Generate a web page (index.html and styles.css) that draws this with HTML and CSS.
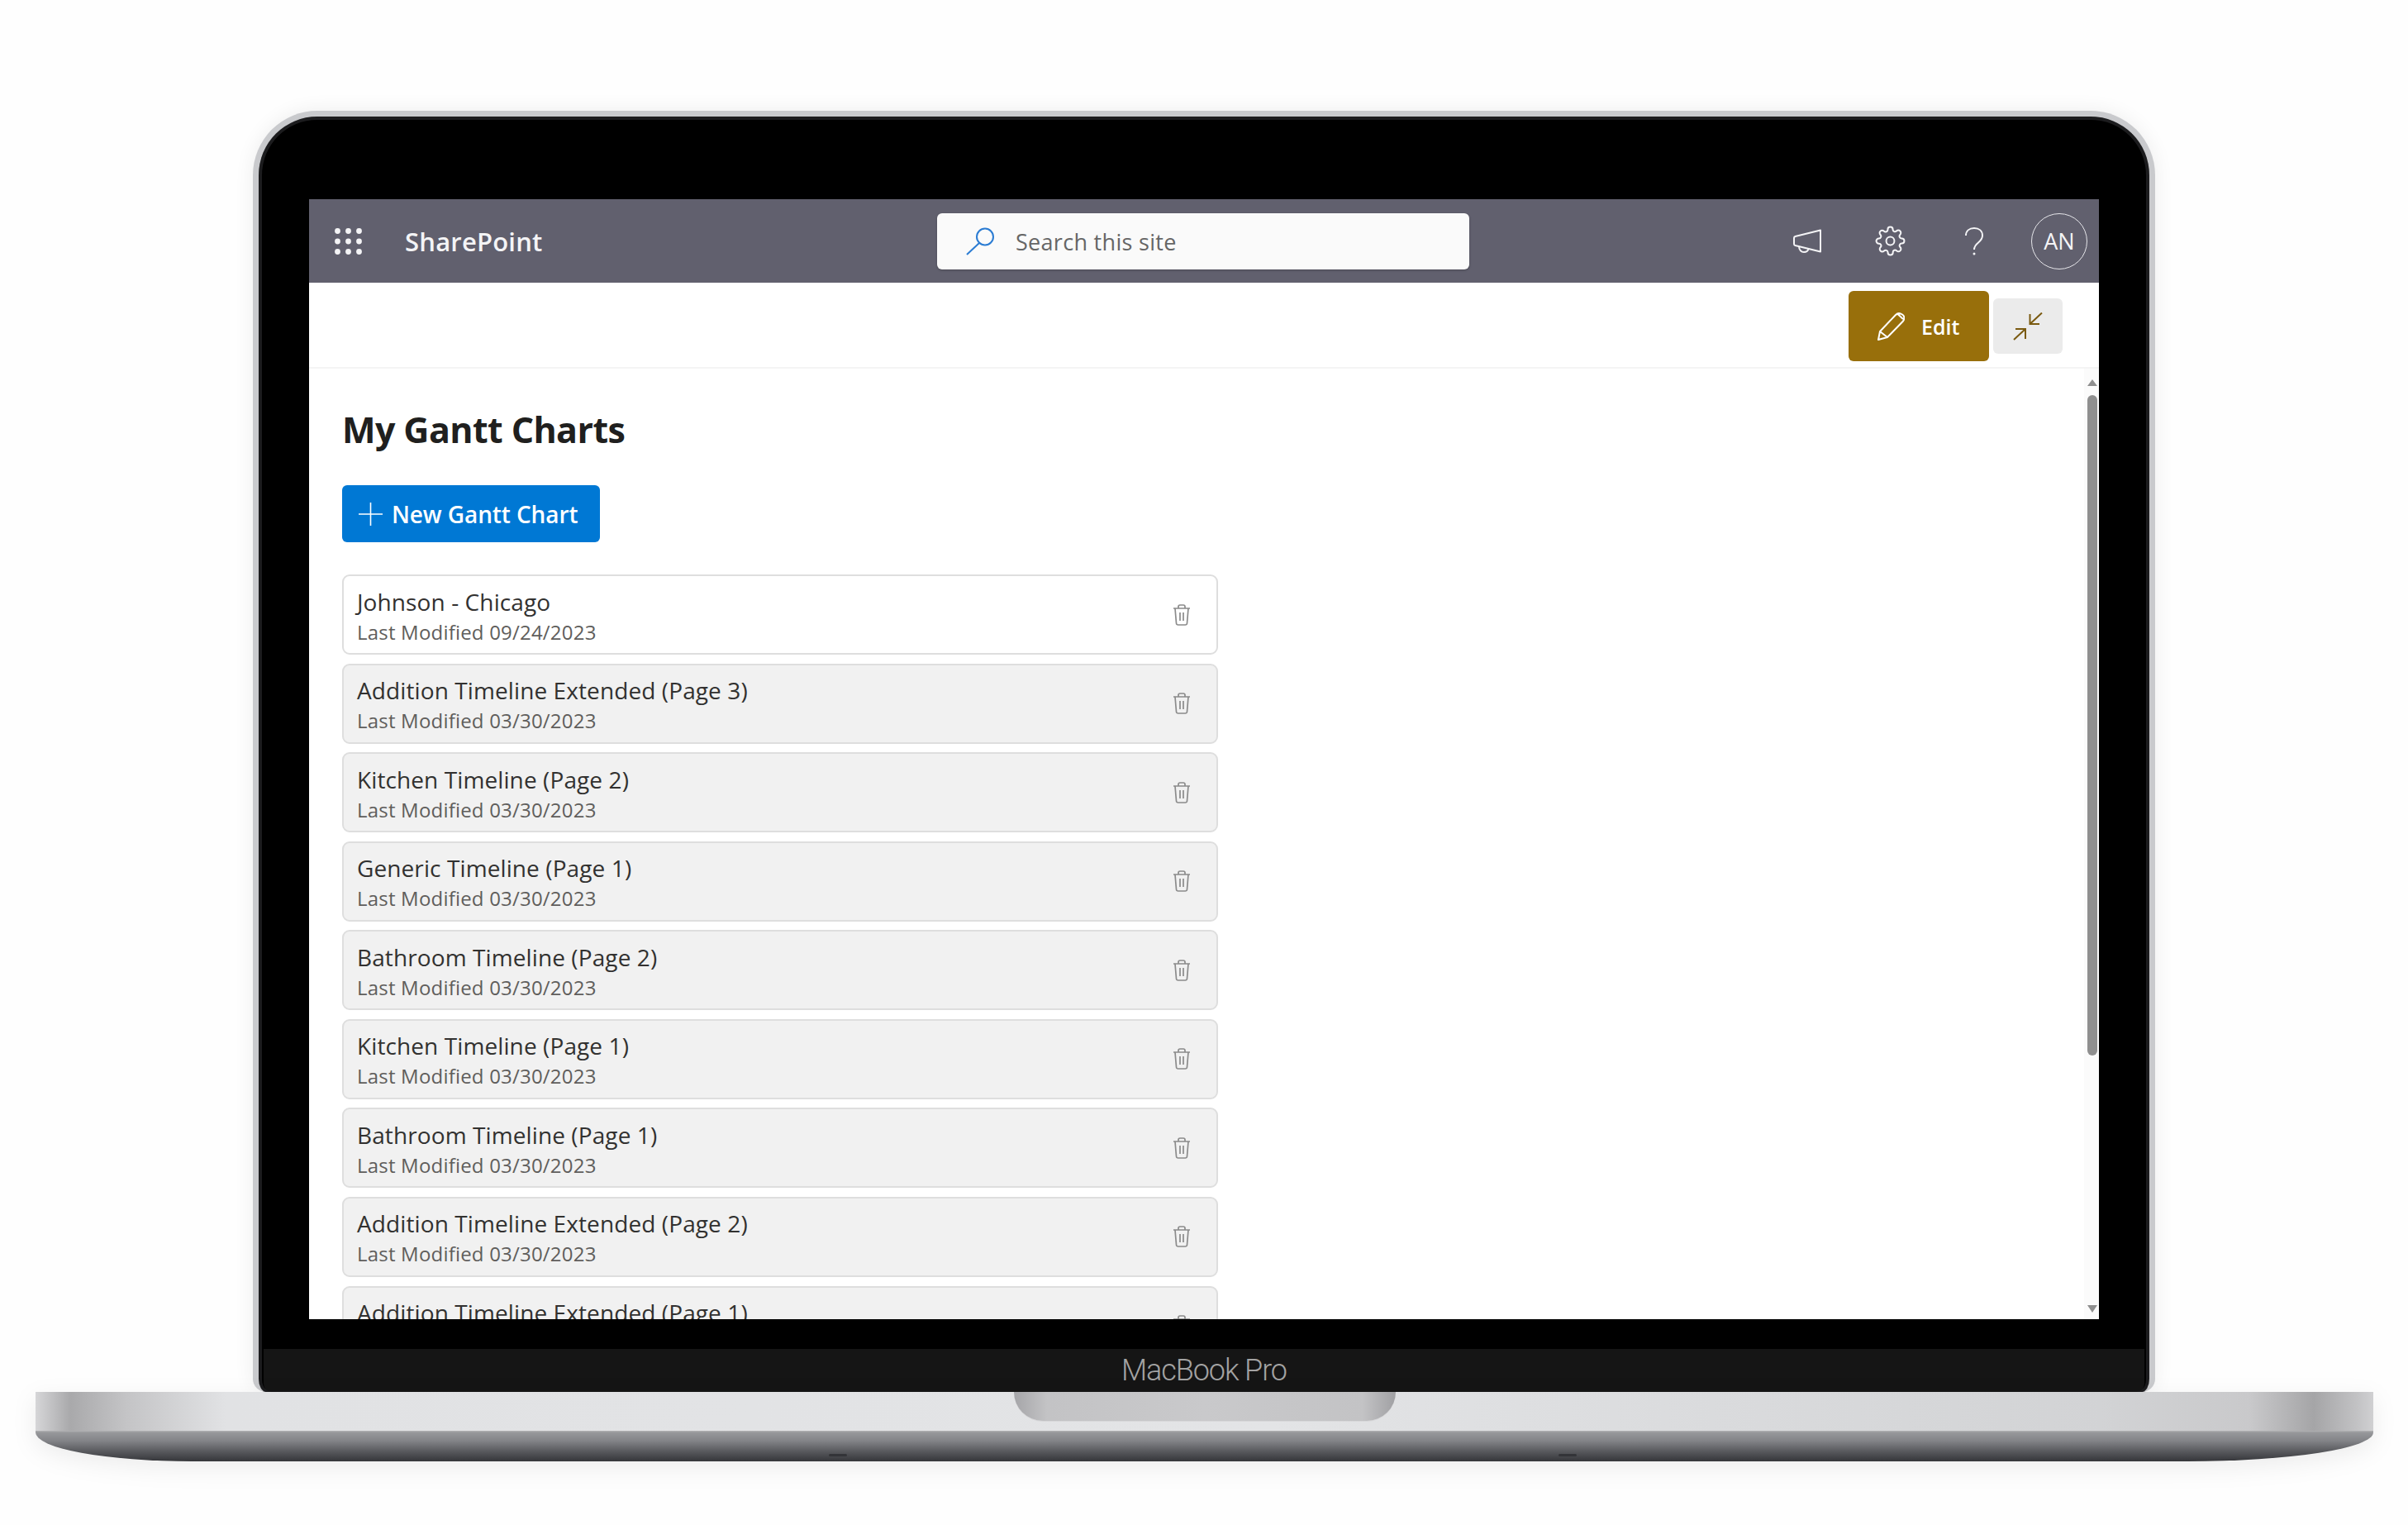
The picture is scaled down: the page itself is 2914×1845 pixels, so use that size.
FILE: index.html
```html
<!doctype html>
<html lang="en">
  <head>
    <meta charset="UTF-8" />
    <title>My Gantt Charts - SharePoint</title>
    <link rel="stylesheet" href="styles.css">
  </head>
  <body>
    <div class="laptop">
      <div class="lid">
        <div class="screen">
          <header class="suite-bar">
            <div class="suite-left">
              <svg class="waffle" viewBox="0 0 33 32" aria-hidden="true">
                <g fill="#f4f4f6">
                  <circle cx="3.5" cy="3.5" r="3.4" /><circle cx="16.5" cy="3.5" r="3.4" /><circle cx="29.5" cy="3.5" r="3.4" />
                  <circle cx="3.5" cy="16" r="3.4" /><circle cx="16.5" cy="16" r="3.4" /><circle cx="29.5" cy="16" r="3.4" />
                  <circle cx="3.5" cy="28.5" r="3.4" /><circle cx="16.5" cy="28.5" r="3.4" /><circle cx="29.5" cy="28.5" r="3.4" />
                </g>
              </svg>
              <span class="brand">SharePoint</span>
            </div>
            <div class="search-box">
              <svg class="search-icon" viewBox="0 0 34 34" aria-hidden="true">
                <circle cx="23" cy="11.5" r="10" fill="none" stroke="#2b7cd3" stroke-width="2" />
                <path d="M16 19 1 33" fill="none" stroke="#2b7cd3" stroke-width="2" />
              </svg>
              <span class="search-text">Search this site</span>
            </div>
            <div class="suite-right">
              <svg class="icon-megaphone" viewBox="0 0 35 29" aria-hidden="true">
                <path d="M33 1.5v26L2.5 20c-1-.3-1.5-1-1.500-2v-7c0-1 .5-1.700 1.500-2z" fill="none" stroke="#f4f4f6" stroke-width="2" stroke-linejoin="round" />
                <path d="M7 21c0 4.500 3 7 6 7s5-1.500 5.500-4" fill="none" stroke="#f4f4f6" stroke-width="2" />
              </svg>
              <svg class="icon-gear" viewBox="0 0 24 24" aria-hidden="true">
                <circle cx="12" cy="12" r="3.200" fill="none" stroke="#f4f4f6" stroke-width="1.300" />
                <path d="M19.400 15a1.650 1.650 0 0 0 .33 1.820l.06.06a2 2 0 0 1 0 2.830 2 2 0 0 1-2.830 0l-.06-.06a1.650 1.650 0 0 0-1.820-.33 1.650 1.650 0 0 0-1 1.510V21a2 2 0 0 1-2 2 2 2 0 0 1-2-2v-.09A1.650 1.650 0 0 0 9 19.400a1.650 1.650 0 0 0-1.820.33l-.06.06a2 2 0 0 1-2.830 0 2 2 0 0 1 0-2.830l.06-.06a1.650 1.650 0 0 0 .33-1.820 1.650 1.650 0 0 0-1.510-1H3a2 2 0 0 1-2-2 2 2 0 0 1 2-2h.09A1.650 1.650 0 0 0 4.600 9a1.650 1.650 0 0 0-.33-1.820l-.06-.06a2 2 0 0 1 0-2.830 2 2 0 0 1 2.830 0l.06.06a1.650 1.650 0 0 0 1.820.33H9a1.650 1.650 0 0 0 1-1.510V3a2 2 0 0 1 2-2 2 2 0 0 1 2 2v.09a1.650 1.650 0 0 0 1 1.510 1.650 1.650 0 0 0 1.820-.33l.06-.06a2 2 0 0 1 2.830 0 2 2 0 0 1 0 2.830l-.06.06a1.650 1.650 0 0 0-.33 1.820V9a1.650 1.650 0 0 0 1.510 1H21a2 2 0 0 1 2 2 2 2 0 0 1-2 2h-.09a1.650 1.650 0 0 0-1.510 1z" fill="none" stroke="#f4f4f6" stroke-width="1.300" />
              </svg>
              <svg class="icon-help" viewBox="0 0 22 34" aria-hidden="true">
                <path d="M1 10C1 4.500 5 1 11 1s10 3.500 10 9c0 4-2 6-5 8.500-3 2.500-5 4.500-5 8.500" fill="none" stroke="#f4f4f6" stroke-width="2" />
                <circle cx="11" cy="32" r="1.500" fill="#f4f4f6" />
              </svg>
              <div class="avatar">AN</div>
            </div>
          </header>

          <div class="command-bar">
            <button class="edit-btn" type="button">
              <svg class="icon-pencil" viewBox="0 0 33 34" aria-hidden="true">
                <path d="M1 33 3 23 22 3c2-2 5-2.500 8-.5s3 5.500 1 8L12 30zM3 23l9 7M24 1.500l7 6.500" fill="none" stroke="#fff" stroke-width="2" stroke-linejoin="round" />
              </svg>
              <span>Edit</span>
            </button>
            <button class="collapse-btn" type="button" aria-label="Collapse">
              <svg class="icon-collapse" viewBox="0 0 36 34" aria-hidden="true">
                <path d="M35 .5 20.500 14M20.500 2v12H32M1 33 15 20M3 20h12v12" fill="none" stroke="#7a5a10" stroke-width="2" />
              </svg>
            </button>
          </div>

          <div class="page-body">
            <main class="content">
              <h1>My Gantt Charts</h1>
              <button class="new-btn" type="button">
                <svg class="icon-plus" viewBox="0 0 29 28" aria-hidden="true">
                  <path d="M14.500 0v28M0 14h29" fill="none" stroke="#fff" stroke-width="1.600" />
                </svg>
                <span>New Gantt Chart</span>
              </button>

              <div class="chart-list">
                <div class="chart-row chart-row-active">
                  <div class="chart-text">
                    <span class="chart-name">Johnson - Chicago</span>
                    <span class="chart-date">Last Modified 09/24/2023</span>
                  </div>
                  <svg class="icon-trash" viewBox="0 0 22 26"><use href="#trash" /></svg>
                </div>
                <div class="chart-row">
                  <div class="chart-text">
                    <span class="chart-name">Addition Timeline Extended (Page 3)</span>
                    <span class="chart-date">Last Modified 03/30/2023</span>
                  </div>
                  <svg class="icon-trash" viewBox="0 0 22 26"><use href="#trash" /></svg>
                </div>
                <div class="chart-row">
                  <div class="chart-text">
                    <span class="chart-name">Kitchen Timeline (Page 2)</span>
                    <span class="chart-date">Last Modified 03/30/2023</span>
                  </div>
                  <svg class="icon-trash" viewBox="0 0 22 26"><use href="#trash" /></svg>
                </div>
                <div class="chart-row">
                  <div class="chart-text">
                    <span class="chart-name">Generic Timeline (Page 1)</span>
                    <span class="chart-date">Last Modified 03/30/2023</span>
                  </div>
                  <svg class="icon-trash" viewBox="0 0 22 26"><use href="#trash" /></svg>
                </div>
                <div class="chart-row">
                  <div class="chart-text">
                    <span class="chart-name">Bathroom Timeline (Page 2)</span>
                    <span class="chart-date">Last Modified 03/30/2023</span>
                  </div>
                  <svg class="icon-trash" viewBox="0 0 22 26"><use href="#trash" /></svg>
                </div>
                <div class="chart-row">
                  <div class="chart-text">
                    <span class="chart-name">Kitchen Timeline (Page 1)</span>
                    <span class="chart-date">Last Modified 03/30/2023</span>
                  </div>
                  <svg class="icon-trash" viewBox="0 0 22 26"><use href="#trash" /></svg>
                </div>
                <div class="chart-row">
                  <div class="chart-text">
                    <span class="chart-name">Bathroom Timeline (Page 1)</span>
                    <span class="chart-date">Last Modified 03/30/2023</span>
                  </div>
                  <svg class="icon-trash" viewBox="0 0 22 26"><use href="#trash" /></svg>
                </div>
                <div class="chart-row">
                  <div class="chart-text">
                    <span class="chart-name">Addition Timeline Extended (Page 2)</span>
                    <span class="chart-date">Last Modified 03/30/2023</span>
                  </div>
                  <svg class="icon-trash" viewBox="0 0 22 26"><use href="#trash" /></svg>
                </div>
                <div class="chart-row">
                  <div class="chart-text">
                    <span class="chart-name">Addition Timeline Extended (Page 1)</span>
                    <span class="chart-date">Last Modified 03/30/2023</span>
                  </div>
                  <svg class="icon-trash" viewBox="0 0 22 26"><use href="#trash" /></svg>
                </div>
              </div>
            </main>

            <div class="scrollbar">
              <span class="arrow-up"></span>
              <span class="thumb"></span>
              <span class="arrow-down"></span>
            </div>
          </div>
        </div>
        <div class="chin"><span class="model">MacBook Pro</span></div>
      </div>

      <div class="base">
        <div class="base-top"><span class="notch"></span></div>
        <div class="base-lip"><span class="foot"></span><span class="foot"></span></div>
      </div>
    </div>

    <!-- shared trash glyph -->
    <svg class="defs" aria-hidden="true">
      <symbol id="trash" viewBox="0 0 22 26">
        <path d="M1 5h20M3 5l1.500 18c.1 1.200 1 2 2.200 2h8.600c1.200 0 2.100-.8 2.200-2L19 5M7 5V3c0-1.200.8-2 2-2h4c1.200 0 2 .8 2 2v2M9 10v10M13 10v10" fill="none" stroke="#8b8b8b" stroke-width="1.700" />
      </symbol>
    </svg>
  </body>
</html>
```

FILE: styles.css
```css
* {
  margin: 0;
  padding: 0;
  box-sizing: border-box;
}

body {
  background-color: #fefefe;
  font-family: "Open Sans", "Noto Sans", sans-serif;
  overflow: hidden;
}

.laptop {
  width: 2914px;
  height: 1845px;
  padding-top: 134px;
}

.lid {
  width: 2302px;
  height: 1550px;
  margin-left: 306px;
  border: 7px solid #c9cacd;
  border-bottom: 0;
  border-radius: 78px 78px 16px 16px;
  background-color: #000;
  box-shadow: inset 0 0 0 4px #1c1c1e, 0 0 24px rgba(0, 0, 0, 0.07);
  padding-top: 100px;
}

.screen {
  display: flex;
  flex-direction: column;
  width: 2166px;
  height: 1355px;
  margin-left: 61px;
  background-color: #fff;
  overflow: hidden;
}

.chin {
  display: flex;
  justify-content: center;
  width: 2276px;
  height: 52px;
  margin: 36px 0 0 6px;
  background-color: #151515;
  border-radius: 0 0 10px 10px;
  padding-top: 5px;
}

.model {
  font-family: Roboto, "Liberation Sans", sans-serif;
  font-weight: 300;
  font-size: 36px;
  line-height: 42px;
  letter-spacing: -1.1px;
  color: #a3a3a3;
}

/* base of the laptop */
.base {
  width: 2829px;
  margin-left: 43px;
  filter: drop-shadow(0 8px 14px rgba(0, 0, 0, 0.07));
}

.base-top {
  display: flex;
  justify-content: center;
  height: 47px;
  background: linear-gradient(90deg, #d6d6d8 0, #a9a9ab 42px, #c4c4c6 110px, #e1e2e4 230px, #e3e4e6 1500px, #d2d3d5 calc(100% - 330px), #c9c9cb calc(100% - 150px), #a5a5a7 calc(100% - 72px), #c2c2c4 calc(100% - 20px), #d0d0d2 100%);
}

.notch {
  width: 462px;
  height: 35px;
  background: linear-gradient(90deg, #a5a5a8 0, #c3c3c5 40px, #c9c9cb 50%, #c3c3c5 calc(100% - 40px), #a0a0a3 100%);
  border-radius: 0 0 36px 36px;
  box-shadow: 0 1px 0 #d8d8da;
}

.base-lip {
  display: flex;
  justify-content: space-between;
  align-items: flex-end;
  height: 37px;
  padding: 0 964px 6px 960px;
  background: linear-gradient(180deg, #b3b3b5 0, #97989b 2px, #838488 12px, #55565a 26px, #35363a 100%);
  border-radius: 0 0 225px 190px / 0 0 35px 35px;
}

.foot {
  width: 22px;
  height: 3px;
  background-color: #333438;
  border-radius: 2px;
}

/* top suite bar */
.suite-bar {
  display: grid;
  grid-template-columns: 729px 644px 1fr;
  align-items: center;
  flex-shrink: 0;
  height: 101px;
  background-color: #61606e;
  padding: 0 14px 0 31px;
}

.suite-left {
  display: flex;
  align-items: center;
}

.waffle {
  width: 33px;
  height: 32px;
}

.brand {
  margin-left: 52px;
  font-size: 31px;
  line-height: 44px;
  padding-top: 1px;
  font-weight: 600;
  letter-spacing: 0.2px;
  color: #f4f4f6;
}

.search-box {
  display: flex;
  align-items: center;
  height: 68px;
  padding-left: 35px;
  background-color: #fafafa;
  border-radius: 6px;
  box-shadow: 0 1px 3px rgba(0, 0, 0, 0.25);
}

.search-icon {
  width: 34px;
  height: 34px;
}

.search-text {
  margin-left: 26px;
  padding-top: 2px;
  font-size: 27px;
  letter-spacing: 0.3px;
  color: #666;
}

.suite-right {
  display: flex;
  align-items: center;
  justify-content: flex-end;
}

.icon-megaphone {
  width: 35px;
  height: 29px;
}

.icon-gear {
  width: 37px;
  height: 37px;
  margin-left: 64px;
}

.icon-help {
  width: 22px;
  height: 34px;
  margin-left: 72px;
}

.avatar {
  display: flex;
  align-items: center;
  justify-content: center;
  width: 68px;
  height: 68px;
  margin-left: 58px;
  border: 1px solid #e6e6ea;
  border-radius: 50%;
  font-size: 27px;
  color: #f4f4f6;
}

/* edit bar */
.command-bar {
  display: flex;
  align-items: center;
  justify-content: flex-end;
  gap: 5px;
  flex-shrink: 0;
  height: 104px;
  padding: 3px 44px 0 0;
  border-bottom: 2px solid #f4f4f4;
}

.edit-btn {
  display: flex;
  align-items: center;
  width: 170px;
  height: 85px;
  padding-left: 35px;
  background-color: #986f0b;
  border: none;
  border-radius: 6px;
  font-family: inherit;
  font-size: 25px;
  font-weight: 600;
  color: #fff;
}

.edit-btn span {
  margin-left: 20px;
}

.icon-pencil {
  width: 33px;
  height: 34px;
}

.collapse-btn {
  display: flex;
  align-items: center;
  justify-content: center;
  width: 84px;
  height: 67px;
  background-color: #ebebeb;
  border: none;
  border-radius: 6px;
}

.icon-collapse {
  width: 36px;
  height: 34px;
}

/* main area */
.page-body {
  display: flex;
  flex: 1;
  min-height: 0;
}

.content {
  flex: 1;
  min-width: 0;
  padding: 45px 0 0 40px;
  overflow: hidden;
}

h1 {
  font-size: 43px;
  line-height: 58px;
  font-weight: 700;
  letter-spacing: -0.6px;
  color: #201f1e;
}

.new-btn {
  display: flex;
  align-items: center;
  width: 312px;
  height: 69px;
  margin-top: 38px;
  padding-left: 20px;
  background-color: #0078d4;
  border: none;
  border-radius: 6px;
  font-family: inherit;
  font-size: 28px;
  font-weight: 600;
  letter-spacing: -0.1px;
  color: #fff;
}

.new-btn span {
  margin-left: 11px;
}

.icon-plus {
  width: 29px;
  height: 28px;
}

.chart-list {
  display: flex;
  flex-direction: column;
  gap: 10.57px;
  width: 1060px;
  margin-top: 39px;
}

.chart-row {
  display: flex;
  align-items: center;
  justify-content: space-between;
  flex-shrink: 0;
  height: 97px;
  padding: 0 31px 0 16px;
  background-color: #f1f1f1;
  border: 2px solid #dedede;
  border-radius: 9px;
}

.chart-row-active {
  background-color: #fff;
}

.chart-text {
  display: flex;
  flex-direction: column;
  padding-top: 3px;
}

.chart-name {
  font-size: 28px;
  line-height: 36px;
  letter-spacing: 0.1px;
  color: #323130;
}

.chart-date {
  margin-top: 3px;
  font-size: 24px;
  line-height: 32px;
  letter-spacing: 0.2px;
  color: #605e5c;
}

.icon-trash {
  width: 22px;
  height: 26px;
}

.scrollbar {
  display: flex;
  flex-direction: column;
  align-items: center;
  flex-shrink: 0;
  width: 18px;
  padding: 13px 2px 8px 4px;
  background-color: #fbfbfb;
}

.thumb {
  width: 12px;
  height: 799px;
  margin-top: 11px;
  background-color: #8f8f8f;
  border-radius: 6px;
}

.arrow-up,
.arrow-down {
  width: 0;
  height: 0;
  border-left: 6px solid transparent;
  border-right: 6px solid transparent;
}

.arrow-up {
  border-bottom: 8px solid #8f8f8f;
}

.arrow-down {
  margin-top: auto;
  border-top: 9px solid #8f8f8f;
}

.defs {
  display: none;
}
```
